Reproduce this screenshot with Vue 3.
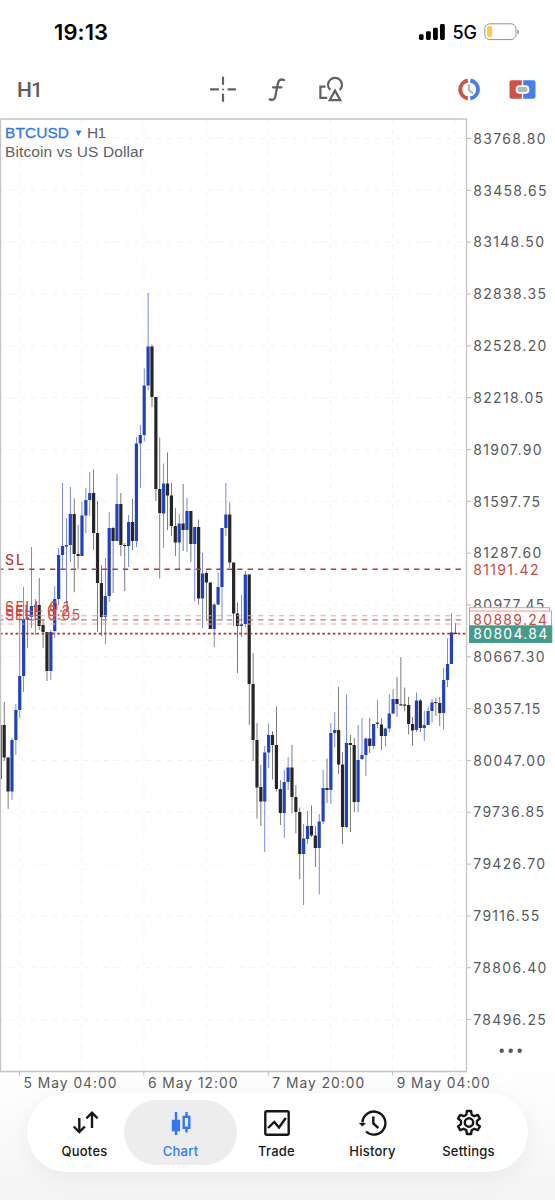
<template>
  <div class="app">
    <header class="status-bar">
      <span class="clock">19:13</span>
      <div class="status-icons">
        <svg width="26" height="17" viewBox="0 0 26 17" aria-hidden="true">
          <rect x="0" y="10.3" width="4.6" height="5.7" rx="1.4" />
          <rect x="7" y="7.2" width="4.8" height="8.8" rx="1.4" />
          <rect x="14" y="3.7" width="4.8" height="12.3" rx="1.4" />
          <rect x="21" y="0" width="4.8" height="16" rx="1.4" />
        </svg>
        <span class="network">5G</span>
        <svg class="battery" width="37" height="18" viewBox="0 0 37 18" aria-hidden="true">
          <rect x="0.8" y="0.8" width="31.2" height="15.8" rx="5" fill="none" stroke="#929292" stroke-width="1" />
          <rect x="3" y="3" width="5" height="11.3" rx="2.2" fill="#f8cd45" />
          <path d="M33.4 6.2c2 .7 2 4.4 0 5.2z" fill="#929292" />
        </svg>
      </div>
    </header>

    <div class="toolbar">
      <button type="button" class="timeframe">H1</button>
      <div class="tools">
        <svg width="28" height="28" viewBox="0 0 28 28" fill="none" stroke="#616161" stroke-width="2.2" stroke-linecap="round">
          <path d="M14 2.500v6.500M14 19.500v6.500M2 14.400h7M19.500 14.400h6.500" />
          <path d="M14 14.400v.01" stroke-width="2" />
        </svg>
        <svg width="28" height="28" viewBox="0 0 28 28" fill="none" stroke="#616161" stroke-width="2.3" stroke-linecap="round">
          <path d="M21 5c-3.200-1.200-5.300-.2-6 3l-2.700 13.500c-.6 3-2.300 4.100-5.600 2.900M10 12.300h8.500" />
        </svg>
        <svg width="28" height="28" viewBox="0 0 28 28" fill="none" stroke="#616161" stroke-width="2.2">
          <path d="M8.500 11.700H3.400v11.200h6.800" />
          <path d="M13.300 15a7 7 0 1 1 9.400 0" />
          <path d="M18 15.600l-5.300 9.600h10.600z" />
        </svg>
      </div>
      <div class="trade-tools">
        <svg width="28" height="24" viewBox="0 0 28 24" fill="none">
          <path d="M12.900 3.500A9.700 9.200 0 0 0 12.900 21.500" stroke="#cc5346" stroke-width="4" />
          <path d="M15.300 3.500A9.700 9.200 0 0 1 15.300 21.500" stroke="#477fe6" stroke-width="4" />
          <path d="M14 7.500v5.500l4 3.500" stroke="#b3b8bc" stroke-width="2.3" />
        </svg>
        <svg width="28" height="24" viewBox="0 0 28 24" fill="none">
          <path d="M2.500 3.200h10.300v18.600H2.500a2 2 0 0 1-2-2V5.200a2 2 0 0 1 2-2z" fill="#cc5346" />
          <path d="M14.200 3.200H24.500a2 2 0 0 1 2 2v14.600a2 2 0 0 1-2 2H14.200z" fill="#477fe6" />
          <rect x="6.700" y="8.200" width="13.600" height="8.600" rx="3.800" fill="#fff" />
          <rect x="8.500" y="10" width="10" height="5" rx="2" fill="#b0b7bc" />
        </svg>
      </div>
    </div>

    <!-- the chart keeps page coordinates, shifted by the header height -->
    <svg class="chart" width="555" height="975" viewBox="0 118 555 975">
      <g class="grid">
        <line v-for="p in prices" :key="p.label" x1="0" x2="466" :y1="p.y" :y2="p.y" />
        <line v-for="x in gridX" :key="x" :x1="x" :x2="x" y1="119" y2="1071" />
      </g>

      <g v-for="c in candles" :key="c.x" :class="c.type">
        <rect class="wick" :x="c.x - 0.35" :y="c.high" width="0.75" :height="c.low - c.high" />
        <rect :x="c.x - 1.6" :y="c.top" width="3.2" :height="c.bottom - c.top" />
      </g>

      <g class="levels">
        <line x1="-2" x2="466" y1="569.3" y2="569.3" />
        <line class="faint" x1="-2" x2="466" y1="615.7" y2="615.7" />
        <line class="mid" x1="-2" x2="466" y1="619.8" y2="619.8" />
        <line class="faint" x1="-2" x2="466" y1="624" y2="624" />
        <line class="dotted" x1="0" x2="466" y1="633.6" y2="633.6" />
      </g>
      <g class="level-text">
        <text class="strong" x="5" y="565" textLength="19">SL</text>
        <text x="5" y="612" textLength="64">SELL 0.1</text>
        <text x="5" y="615.5" textLength="65">SELL 0.2</text>
        <text x="5" y="619.5" textLength="75">SELL 0.05</text>
      </g>

      <path class="frame" d="M0.500 1071.500V119h466v952.500H0" />
      <g class="ticks">
        <line v-for="p in prices" :key="p.label" x1="467" x2="471" :y1="p.y" :y2="p.y" />
        <line v-for="d in dates" :key="d.label" :x1="d.x" :x2="d.x" y1="1072" y2="1075.5" />
      </g>
      <text v-for="p in prices" :key="p.label" class="axis" x="473.3" :y="p.y + 5.2">{{ p.label }}</text>
      <text v-for="d in dates" :key="d.label" class="axis date" :x="d.x + 4" y="1087.5">{{ d.label }}</text>
      <text class="axis red" x="473.3" y="574.6">81191.42</text>

      <rect class="order-box" x="469.5" y="607.7" width="80" height="18" />
      <rect class="order-box" x="469.5" y="611" width="82" height="18" />
      <text class="axis red" x="473.3" y="625">80889.24</text>
      <rect x="469" y="625.3" width="83.3" height="17.7" fill="#479b8d" />
      <text class="axis white" x="473.3" y="639.2">80804.84</text>

      <text class="symbol blue" x="5" y="138" textLength="64">BTCUSD</text>
      <path d="M75.500 130.500h6l-3 5.800z" fill="#3478f6" />
      <text class="symbol" x="87" y="138" textLength="19">H1</text>
      <text class="symbol" x="5" y="157" textLength="139">Bitcoin vs US Dollar</text>

      <g fill="#58595c">
        <circle cx="501.7" cy="1050.8" r="2.2" />
        <circle cx="510.7" cy="1050.8" r="2.2" />
        <circle cx="519.7" cy="1050.8" r="2.2" />
      </g>
    </svg>

    <nav class="tabs">
      <button v-for="tab in tabs" :key="tab.id" type="button" class="tab" :class="{ active: tab.id === active }" @click="active = tab.id">
        <svg width="30" height="30" viewBox="0 0 30 30" fill="none" stroke="currentColor" stroke-width="2.4">
          <path v-if="tab.id === 'quotes'" d="M9.300 10v14M3.700 18.500l5.600 5.600 5.600-5.600M22 20V4.700M16.400 10.300l5.600-5.600 5.600 5.600" />
          <template v-else-if="tab.id === 'chart'">
            <path d="M10 4v23M20.500 4v5M20.500 20v4.500" />
            <rect x="5.8" y="11.8" width="8.2" height="11.5" fill="currentColor" stroke="none" />
            <rect x="17.7" y="8.8" width="5.6" height="11" />
          </template>
          <template v-else-if="tab.id === 'trade'">
            <rect x="3.3" y="3.3" width="23.4" height="23.4" rx="1.5" />
            <path d="M6 20l6.300-6 4.700 5.500L23.800 10" />
          </template>
          <template v-else-if="tab.id === 'history'">
            <path d="M4.400 14.500A11.500 11.500 0 1 1 8 23.500M15.300 8.500v7l5 4.500" />
            <path d="M.8 15h7.200l-3.600 3.600z" fill="currentColor" stroke="none" />
          </template>
          <template v-else>
            <path
              d="M12.900 3h4.200l.6 3.700 2.600 1.500 3.500-1.300 2.100 3.600-2.900 2.400v3.200l2.900 2.400-2.100 3.600-3.500-1.300-2.600 1.500-.6 3.700h-4.200l-.6-3.700-2.600-1.500-3.500 1.300-2.100-3.600 2.900-2.400v-3.200l-2.900-2.400 2.100-3.600 3.500 1.300 2.600-1.500z"
              stroke-linejoin="round"
            />
            <circle cx="15" cy="14.5" r="4.2" />
          </template>
        </svg>
        <span>{{ tab.label }}</span>
      </button>
    </nav>
  </div>
</template>

<script setup>
import { ref } from "vue";

const active = ref("chart");

const tabs = [
  { id: "quotes", label: "Quotes" },
  { id: "chart", label: "Chart" },
  { id: "trade", label: "Trade" },
  { id: "history", label: "History" },
  { id: "settings", label: "Settings" },
];

const prices = Array.from({ length: 18 }, (_, i) => ({
  label: (83768.8 - i * 310.15).toFixed(2),
  y: 138.5 + i * 51.83,
}));

const gridX = Array.from({ length: 8 }, (_, i) => 19.5 + i * 62.2);

const dates = ["5 May 04:00", "6 May 12:00", "7 May 20:00", "9 May 04:00"].map((label, i) => ({
  label,
  x: 19.5 + i * 124.4,
}));

// direction (1 up, 0 down), high, body top, body bottom, low
const rows = [
  [1, 725, 725, 779, 779], [0, 702, 725, 757.5, 761], [0, 757, 757.5, 791.5, 809],
  [1, 738, 740, 791.5, 800], [1, 704, 710, 740, 755], [1, 612, 676, 710, 718],
  [1, 587, 619, 676, 692], [1, 603, 617.5, 619, 648], [1, 547, 606, 617, 628],
  [1, 599, 605.5, 607, 635], [0, 578, 605, 626, 630], [0, 620, 625, 632, 648],
  [0, 632, 632, 671, 681], [1, 630, 632, 671, 680], [1, 586, 599, 631, 638],
  [1, 548, 555, 599, 605], [1, 483, 546, 555, 569], [1, 518, 545, 546.5, 603],
  [1, 487, 514, 545, 562], [0, 498.5, 514, 554, 592], [0, 525, 554, 556, 569],
  [1, 501.5, 515.5, 556, 556], [1, 488, 500, 515.5, 533], [1, 472, 493, 500, 516],
  [0, 469.5, 493, 533, 550], [0, 501, 533, 583, 632], [0, 565, 583, 617, 636],
  [1, 558, 596, 617, 644], [1, 512, 528, 596, 602], [0, 526.5, 528, 541, 593],
  [1, 474, 504, 541, 541], [0, 493, 504, 545, 556], [0, 543, 545, 546, 591],
  [1, 515, 522, 546, 567], [0, 499, 522, 541, 550], [1, 437, 443.5, 541, 547],
  [1, 425, 435, 443.5, 488], [1, 368.5, 385.5, 435, 441.5], [1, 293, 346.5, 385.5, 390.5],
  [0, 344.5, 346.5, 397, 407], [0, 397, 397, 489, 501], [0, 437.5, 489, 513, 578.5],
  [1, 463.5, 483.5, 513.5, 548], [0, 452.5, 483.5, 495.5, 530], [0, 483, 495.5, 526, 536],
  [0, 508, 526, 542.5, 556], [1, 514, 523.5, 542.5, 569], [0, 484, 523.5, 530, 551],
  [1, 498, 511, 530, 552], [0, 511, 511, 544, 562], [1, 527, 527, 544, 601.5],
  [0, 519.5, 527, 598.5, 604.5], [1, 553, 573.5, 598.5, 628], [0, 571, 573, 582.5, 621],
  [0, 582.5, 582.5, 629, 629], [1, 603, 604.5, 629, 647], [1, 572.5, 587, 604.5, 605],
  [1, 528, 528, 587, 621], [1, 483, 514.5, 528, 536], [0, 502.5, 514.5, 562.5, 568],
  [0, 562.5, 562.5, 613.5, 626], [0, 602.5, 613.5, 626, 673], [1, 595, 624, 626, 637],
  [1, 571, 574.5, 624, 627], [0, 574.5, 574.5, 684, 725], [0, 653, 684, 740, 761],
  [0, 723, 740, 787.5, 818.5], [0, 765, 787, 801.5, 826], [1, 746, 752.5, 801.5, 852],
  [1, 723.5, 735, 752.5, 768], [0, 731, 735, 745, 779.5], [0, 706.5, 745, 789, 791.5],
  [0, 780, 789, 813, 825], [1, 770, 782, 813, 838], [1, 757, 767.5, 782, 790],
  [0, 745, 767.5, 797, 813], [0, 785, 797, 812, 833.5], [0, 807.5, 812, 854, 879],
  [1, 824, 838.5, 854, 905], [1, 811, 826, 839, 844], [0, 805.5, 826, 835.5, 837],
  [0, 826, 835.5, 848, 867], [1, 814, 821.5, 848, 894.5], [1, 770, 788, 821.5, 824],
  [0, 758.5, 788, 790, 803], [1, 723, 733, 790, 804], [1, 712, 730, 733, 747],
  [0, 687, 730, 764.5, 774], [0, 752, 764.5, 827, 844], [1, 694.5, 743, 827, 828],
  [0, 735, 743, 745, 832], [0, 738, 745, 802, 812], [1, 725, 760, 802, 812],
  [1, 718, 755, 759, 760], [1, 738, 738.5, 755, 776], [0, 718, 738.5, 746, 753],
  [1, 724, 724, 746, 749], [1, 700, 722.5, 724, 728], [0, 718, 724.5, 736, 750],
  [1, 727.5, 728.5, 736, 746.5], [1, 694, 713.5, 728.5, 732.5], [1, 689, 699, 713.5, 714],
  [0, 677, 699, 704, 717], [0, 657, 704.3, 705.5, 705.5], [0, 687.5, 704.5, 705.7, 711.5],
  [0, 697, 705, 724, 734.5], [0, 717, 724, 730.5, 745.5], [1, 692.5, 700.5, 730, 732],
  [0, 699, 700.5, 728, 732], [1, 711, 725, 728, 741], [1, 706.5, 711, 725, 725],
  [1, 699, 702.5, 711, 722.5], [0, 698, 702, 703, 716], [0, 697, 703, 713, 726],
  [1, 668, 680, 713, 729.5], [1, 638.5, 664, 680, 687], [1, 613, 632.5, 664, 664],
  [0, 623, 632.8, 634, 634],
];

const candles = rows.map(([up, high, top, bottom, low], i) => ({
  x: 0.3 + i * 3.889,
  type: up ? "up" : "down",
  high,
  top,
  bottom,
  low,
}));
</script>

<style>
body {
  margin: 0;
  background: #ffffff;
}
</style>

<style scoped>
.app {
  width: 555px;
  height: 1200px;
  overflow: hidden;
  display: flex;
  flex-direction: column;
  background: linear-gradient(#ffffff 1060px, #fbfbfb 1120px, #f4f4f4 1200px);
  font-family: Inter, sans-serif;
}

button {
  border: 0;
  padding: 0;
  background: none;
  font-family: inherit;
  cursor: pointer;
}

.status-bar {
  height: 64px;
  flex: none;
  box-sizing: border-box;
  padding: 0 34px 0 54px;
  display: flex;
  align-items: center;
  justify-content: space-between;
}

.clock {
  font-size: 22px;
  line-height: 1;
  font-weight: 600;
  letter-spacing: 0.1px;
}

.status-icons {
  display: flex;
  align-items: center;
}

.network {
  margin: 1px 7px 0 7px;
  font-size: 18px;
  line-height: 1;
  font-weight: 500;
}

.toolbar {
  height: 54px;
  flex: none;
  box-sizing: border-box;
  padding: 0 18px 4px 17px;
  display: flex;
  align-items: center;
}

.timeframe {
  width: 192px;
  padding-top: 2px;
  text-align: left;
  color: #5d5d5d;
  font-family: Roboto, sans-serif;
  font-size: 21px;
  line-height: 1;
  font-weight: 500;
  letter-spacing: -1px;
}

.tools {
  flex: 1;
  display: flex;
  gap: 26px;
}

.trade-tools {
  display: flex;
  gap: 26px;
}

.chart {
  flex: none;
  display: block;
}

.grid line {
  stroke: #f3f3f3;
  stroke-width: 1;
  stroke-dasharray: 5.2 5.2;
}

.up {
  fill: #2242bd;
}

.down {
  fill: #262626;
}

.wick {
  opacity: 0.8;
}

.levels line {
  stroke: #b93a3c;
  stroke-width: 1.5;
  stroke-dasharray: 5.4 5;
}

.levels .faint {
  stroke: #e3a8a5;
  stroke-width: 1.1;
}

.levels .mid {
  stroke: #cc6d6b;
  stroke-width: 1.3;
}

.levels .dotted {
  stroke: #b23437;
  stroke-width: 1.6;
  stroke-dasharray: 2.6 2.6;
}

.level-text {
  fill: #d24a3e;
  font-size: 14px;
}

.level-text .strong {
  fill: #b93a3c;
  font-weight: 500;
}

.frame {
  fill: none;
  stroke: #c4c4c6;
  stroke-width: 1.3;
}

.ticks line {
  stroke: #b9b9bb;
}

.axis {
  fill: #58595d;
  font-size: 14px;
  letter-spacing: 1.3px;
}

.axis.date {
  font-size: 13.8px;
  letter-spacing: 1px;
}

.axis.red {
  fill: #c94b41;
}

.axis.white {
  fill: #ffffff;
}

.order-box {
  fill: #ffffff;
  stroke: #e69a92;
  stroke-width: 1;
}

.symbol {
  fill: #606166;
  font-family: "Liberation Sans", Arial, sans-serif;
  font-size: 15.5px;
}

.symbol.blue {
  fill: #3478e8;
  stroke: #3478e8;
  stroke-width: 0.3;
}

.tabs {
  width: 501px;
  height: 79px;
  flex: none;
  box-sizing: border-box;
  margin-left: 27px;
  padding: 7px 1px;
  display: flex;
  border-radius: 40px;
  background: #ffffff;
  box-shadow: 0 5px 24px rgba(0, 0, 0, 0.06);
}

.tab {
  width: 113px;
  height: 65px;
  flex: none;
  margin-right: -17px;
  border-radius: 33px;
  display: flex;
  flex-direction: column;
  align-items: center;
  color: #171717;
  font-size: 13px;
  line-height: 16px;
  font-weight: 500;
  letter-spacing: 0.25px;
}

.tab svg {
  margin-top: 8px;
}

.tab span {
  margin-top: 5px;
}

.tab.active {
  background: #ededee;
  color: #3478f6;
}
</style>
